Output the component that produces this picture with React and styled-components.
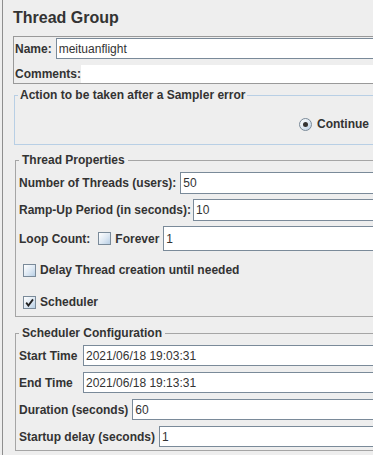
import styled, { createGlobalStyle } from 'styled-components';

const GlobalStyle = createGlobalStyle`
  html, body {
    margin: 0;
    padding: 0;
    background: #eeeeee;
    overflow: hidden;
  }
  body {
    font-family: "Liberation Sans", Arial, sans-serif;
    font-size: 12px;
    color: #333333;
  }
`;

const Page = styled.div`
  display: flex;
  width: 100vw;
  height: 455px;
  padding-left: 2px;
  box-sizing: border-box;
`;

const Divider = styled.div`
  width: 1px;
  background: #8e8e8e;
`;

const Main = styled.div`
  flex: 1;
  min-width: 0;
  display: flex;
  flex-direction: column;
  padding-left: 10px;
`;

const Title = styled.h1`
  margin: 0;
  height: 36px;
  box-sizing: border-box;
  padding-top: 9px;
  font-size: 16px;
  line-height: 18px;
  font-weight: bold;
  color: #333333;
`;

const NamePanel = styled.div`
  display: flex;
  flex-direction: column;
  border: 1px solid #999999;
  border-right: none;
  padding: 1px 0 0 1px;
`;

const Row = styled.div`
  display: flex;
  align-items: center;
  gap: ${p => p.$gap ?? 4}px;
  height: ${p => p.$h ?? 21}px;
  margin-top: ${p => p.$mt ?? 0}px;
`;

const Label = styled.span`
  flex-shrink: 0;
  font-weight: bold;
  white-space: nowrap;
  width: ${p => (p.$w ? `${p.$w}px` : 'auto')};
`;

const Field = styled.input`
  flex: 1;
  min-width: 0;
  height: 100%;
  box-sizing: border-box;
  margin: 0;
  padding: 0 0 0 2px;
  border: 1px solid #7a8a99;
  border-right: none;
  background: #ffffff;
  font-family: "Liberation Sans", Arial, sans-serif;
  font-size: 12px;
  color: #333333;
  outline: none;
`;

const TextArea = styled.div`
  flex: 1;
  height: 18px;
  background: #ffffff;
`;

const Group = styled.fieldset`
  margin: ${p => p.$mt}px 0 0 ${p => p.$ml}px;
  padding: 0 0 ${p => p.$pb ?? 0}px 3px;
  border: 1px solid ${p => (p.$blue ? '#b8cfe5' : '#a5a5a5')};
  border-right: none;
  min-width: 0;
`;

const Legend = styled.legend`
  padding: 0 ${p => p.$pad ?? 3}px;
  font-weight: bold;
  font-size: 12px;
  line-height: 14px;
  color: #333333;
`;

const ActionRow = styled.div`
  display: flex;
  align-items: center;
  gap: 5px;
  padding: 15px 0 13px 281px;
  font-weight: bold;
  white-space: nowrap;
`;

const Radio = styled.span`
  flex-shrink: 0;
  width: 13px;
  height: 13px;
  box-sizing: border-box;
  border-radius: 50%;
  border: 1px solid #7a8a99;
  background: linear-gradient(135deg, #ffffff 0%, #dde8f3 55%, #b8cfe5 100%);
  display: flex;
  align-items: center;
  justify-content: center;
  &::after {
    content: '';
    width: 5px;
    height: 5px;
    border-radius: 50%;
    background: #333333;
  }
`;

const Box = styled.span`
  flex-shrink: 0;
  width: 13px;
  height: 13px;
  box-sizing: border-box;
  border: 1px solid #7a8a99;
  background: linear-gradient(135deg, #ffffff 0%, #dde8f3 55%, #b8cfe5 100%);
  display: flex;
  align-items: center;
  justify-content: center;
`;

const Check = styled.label`
  display: flex;
  align-items: center;
  gap: 4px;
  font-weight: bold;
  white-space: nowrap;
  margin-left: ${p => p.$ml ?? 0}px;
`;

const CheckRow = styled.div`
  display: flex;
  align-items: center;
  height: 26px;
  margin-top: 6px;
  padding-left: 4px;
`;

function CheckBox({ checked, text, ml }) {
  return (
    <Check $ml={ml}>
      <Box>
        {checked && (
          <svg width="9" height="9" viewBox="0 0 9 9">
            <path d="M1.2 4.6 L3.4 7.6 L8 1.4" fill="none" stroke="#222" strokeWidth="1.8" />
          </svg>
        )}
      </Box>
      {text}
    </Check>
  );
}

export default function App() {
  return (
    <Page>
      <GlobalStyle />
      <Divider />
      <Main>
        <Title>Thread Group</Title>

        <NamePanel>
          <Row>
            <Label>Name:</Label>
            <Field readOnly value="meituanflight" />
          </Row>
          <Row $gap={0} $h={18} $mt={6}>
            <Label>Comments:</Label>
            <TextArea />
          </Row>
        </NamePanel>

        <Group $blue $mt={4} $ml={1}>
          <Legend $pad={2}>Action to be taken after a Sampler error</Legend>
          <ActionRow>
            <Radio />
            Continue
          </ActionRow>
        </Group>

        <Group $mt={8} $ml={2} $pb={1}>
          <Legend>Thread Properties</Legend>
          <Row $h={22} $mt={5}>
            <Label>Number of Threads (users):</Label>
            <Field readOnly value="50" />
          </Row>
          <Row $h={22} $mt={5} $gap={2}>
            <Label>Ramp-Up Period (in seconds):</Label>
            <Field readOnly value="10" />
          </Row>
          <Row $h={25} $mt={5}>
            <Label>Loop Count:</Label>
            <CheckBox text="Forever" ml={4} />
            <Field readOnly value="1" />
          </Row>
          <CheckRow>
            <CheckBox text="Delay Thread creation until needed" />
          </CheckRow>
          <CheckRow>
            <CheckBox checked text="Scheduler" />
          </CheckRow>
        </Group>

        <Group $mt={9} $ml={2} $pb={3}>
          <Legend>Scheduler Configuration</Legend>
          <Row $mt={5}>
            <Label $w={60}>Start Time</Label>
            <Field readOnly value="2021/06/18 19:03:31" />
          </Row>
          <Row $mt={6}>
            <Label $w={60}>End Time</Label>
            <Field readOnly value="2021/06/18 19:13:31" />
          </Row>
          <Row $mt={6}>
            <Label>Duration (seconds)</Label>
            <Field readOnly value="60" />
          </Row>
          <Row $mt={6}>
            <Label>Startup delay (seconds)</Label>
            <Field readOnly value="1" />
          </Row>
        </Group>
      </Main>
    </Page>
  );
}
